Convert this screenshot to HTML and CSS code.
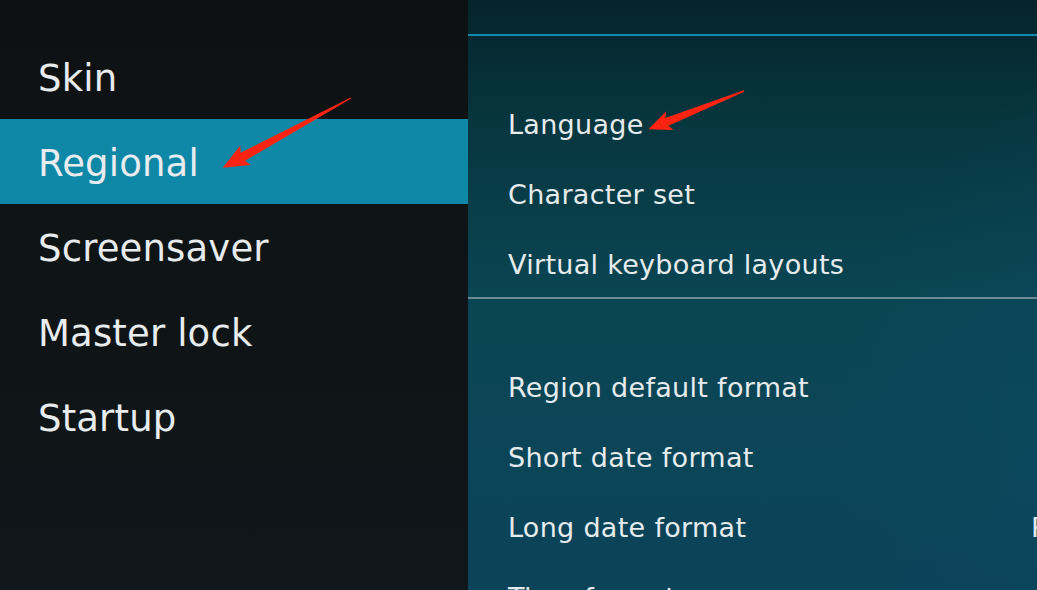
FILE: index.html
```html
<!DOCTYPE html>
<html>
<head>
<meta charset="utf-8">
<link rel="stylesheet" href="styles.css">
</head>
<body>
<div class="screen">
  <aside class="side">
    <ul class="cats">
      <li class="cat">Skin</li>
      <li class="cat active">Regional</li>
      <li class="cat">Screensaver</li>
      <li class="cat">Master lock</li>
      <li class="cat">Startup</li>
    </ul>
  </aside>
  <main class="panel">
    <div class="panel-head"></div>
    <div class="group">
      <div class="row"><span class="label">Language</span><span class="value"></span></div>
      <div class="row"><span class="label">Character set</span><span class="value"></span></div>
      <div class="row"><span class="label">Virtual keyboard layouts</span><span class="value"></span></div>
    </div>
    <div class="sep"></div>
    <div class="group">
      <div class="row"><span class="label">Region default format</span><span class="value"></span></div>
      <div class="row"><span class="label">Short date format</span><span class="value"></span></div>
      <div class="row"><span class="label">Long date format</span><span class="value">Regional (Monday, 3 January 2022)</span></div>
      <div class="row"><span class="label">Time format</span><span class="value"></span></div>
    </div>
  </main>
  <svg class="arrows" width="1037" height="590" viewBox="0 0 1037 590">
    <g transform="translate(351 98) rotate(151.5)">
      <polygon points="0,-0.7 123,-4.6 120,-11 146,0 120,11 123,4.6 0,0.7" fill="#ff2412"/>
    </g>
    <g transform="translate(744 91) rotate(158.2)">
      <polygon points="0,-0.7 83,-4.2 80,-10 103,0 80,10 83,4.2 0,0.7" fill="#ff2412"/>
    </g>
  </svg>
</div>
</body>
</html>
```
FILE: styles.css
```css
* { box-sizing: border-box; }
html, body {
  margin: 0;
  padding: 0;
  width: 1037px;
  height: 590px;
  overflow: hidden;
  background: #0f1416;
  font-family: "DejaVu Sans", sans-serif;
  color: #e9eef0;
}
.screen {
  position: relative;
  display: flex;
  width: 1037px;
  height: 590px;
  overflow: hidden;
}
.side {
  width: 468px;
  flex: none;
  background: linear-gradient(180deg, #0e1112 0%, #0f1517 60%, #0f171a 100%);
}
.cats {
  list-style: none;
  margin: 0;
  padding: 34px 0 0 0;
}
.cat {
  height: 85px;
  line-height: 85px;
  padding: 2px 0 0 38px;
  font-size: 37px;
  letter-spacing: 0.15px;
  color: #e8ecee;
}
.cat.active {
  background: #0f87a7;
}
.panel {
  flex: 1;
  min-width: 0;
  overflow: hidden;
  background:
    radial-gradient(ellipse 520px 420px at 880px 420px, rgba(14, 80, 110, 0.55), rgba(14, 80, 110, 0) 100%),
    linear-gradient(180deg, #05242b 0%, #073740 22%, #0a4553 50%, #0b4558 80%, #0b4359 100%);
}
.panel-head {
  height: 36px;
  border-bottom: 2px solid #1189ad;
}
.group {
  padding-top: 53px;
}
.row {
  display: grid;
  grid-template-columns: 523px max-content;
  height: 70px;
  line-height: 70px;
  padding: 1px 0 0 40px;
  font-size: 27px;
  letter-spacing: 0.3px;
  white-space: nowrap;
}
.label {
  color: #e6ecee;
}
.value {
  color: #e6ecee;
}
.sep {
  height: 2px;
  margin-top: -2px;
  background: #6f8b93;
}
.arrows {
  position: absolute;
  left: 0;
  top: 0;
  pointer-events: none;
}
```
